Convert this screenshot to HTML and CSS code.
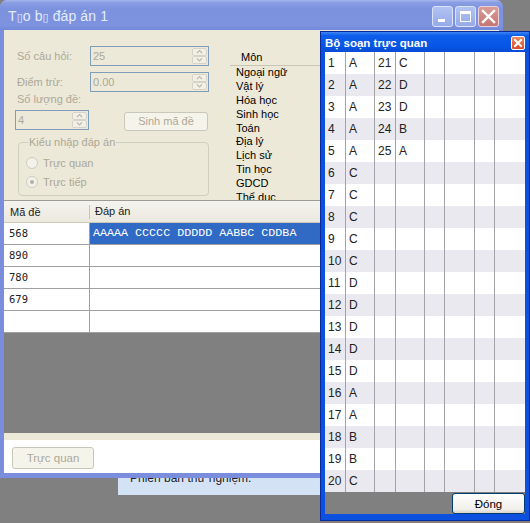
FILE: index.html
```html
<!DOCTYPE html>
<html lang="vi">
<head>
<meta charset="utf-8">
<title>Tạo bộ đáp án</title>
<link rel="stylesheet" href="styles.css">
</head>
<body>
<div class="desktop">
  <div class="status-strip">Phiên bản thử nghiệm.</div>

  <div class="win-main">
    <div class="main-title">
      <span class="main-title-text">T<span class="tofu">▯</span>o b<span class="tofu">▯</span> đáp án 1</span>
      <div class="caption-btns">
        <span class="cbtn"><svg width="19" height="19" viewBox="0 0 19 19"><rect x="5" y="12" width="7" height="3" fill="#fff"/></svg></span>
        <span class="cbtn"><svg width="19" height="19" viewBox="0 0 19 19"><rect x="4.5" y="4.5" width="10" height="10" fill="none" stroke="#fff" stroke-width="1"/><rect x="4" y="4" width="11" height="3" fill="#fff"/></svg></span>
        <span class="cbtn cbtn-close"><svg width="19" height="19" viewBox="0 0 19 19"><path d="M4 4 L15 15 M15 4 L4 15" stroke="#fff" stroke-width="2.4" stroke-linecap="square"/></svg></span>
      </div>
    </div>

    <div class="main-body">
      <div class="form-area">
        <div class="form-left">
          <div class="frow">
            <span class="lbl">Số câu hỏi:</span>
            <div class="spin spin-wide">
              <span class="spin-val">25</span>
              <span class="spin-btns"><svg width="15" height="16" viewBox="0 0 15 16"><rect x="0.5" y="0.5" width="14" height="7" rx="1.5" fill="#F1EFE6" stroke="#D6D3C6"/><rect x="0.5" y="8.5" width="14" height="7" rx="1.5" fill="#F1EFE6" stroke="#D6D3C6"/><path d="M5 5 L7.5 2.5 L10 5 M5 10.5 L7.5 13 L10 10.5" fill="none" stroke="#BDBAAE" stroke-width="1.2"/></svg></span>
            </div>
          </div>
          <div class="frow frow-2">
            <span class="lbl">Điểm trừ:</span>
            <div class="spin spin-wide">
              <span class="spin-val">0.00</span>
              <span class="spin-btns"><svg width="15" height="16" viewBox="0 0 15 16"><rect x="0.5" y="0.5" width="14" height="7" rx="1.5" fill="#F1EFE6" stroke="#D6D3C6"/><rect x="0.5" y="8.5" width="14" height="7" rx="1.5" fill="#F1EFE6" stroke="#D6D3C6"/><path d="M5 5 L7.5 2.5 L10 5 M5 10.5 L7.5 13 L10 10.5" fill="none" stroke="#BDBAAE" stroke-width="1.2"/></svg></span>
            </div>
          </div>
          <div class="lbl lbl-solo">Số lượng đề:</div>
          <div class="frow frow-4">
            <div class="spin spin-narrow">
              <span class="spin-val">4</span>
              <span class="spin-btns"><svg width="15" height="16" viewBox="0 0 15 16"><rect x="0.5" y="0.5" width="14" height="7" rx="1.5" fill="#F1EFE6" stroke="#D6D3C6"/><rect x="0.5" y="8.5" width="14" height="7" rx="1.5" fill="#F1EFE6" stroke="#D6D3C6"/><path d="M5 5 L7.5 2.5 L10 5 M5 10.5 L7.5 13 L10 10.5" fill="none" stroke="#BDBAAE" stroke-width="1.2"/></svg></span>
            </div>
            <button class="xpbtn xpbtn-off btn-gen">Sinh mã đề</button>
          </div>
          <fieldset class="group">
            <legend>Kiểu nhập đáp án</legend>
            <div class="radio"><span class="rcircle"></span>Trực quan</div>
            <div class="radio"><span class="rcircle rchecked"></span>Trực tiếp</div>
          </fieldset>
        </div>
        <div class="subject-list">
          <div class="list-head">Môn</div>
          <ul class="list-items">
            <li>Ngoại ngữ</li>
            <li>Vật lý</li>
            <li>Hóa học</li>
            <li>Sinh học</li>
            <li>Toán</li>
            <li>Địa lý</li>
            <li>Lịch sử</li>
            <li>Tin học</li>
            <li>GDCD</li>
            <li>Thể dục</li>
          </ul>
        </div>
      </div>

      <div class="grid-area">
        <div class="dg-head"><span class="c1">Mã đề</span><span class="c2">Đáp án</span></div>
        <div class="dg-row"><span class="c1">568</span><span class="c2 sel">AAAAA CCCCC DDDDD AABBC CDDBA</span></div>
        <div class="dg-row"><span class="c1">890</span><span class="c2"></span></div>
        <div class="dg-row"><span class="c1">780</span><span class="c2"></span></div>
        <div class="dg-row"><span class="c1">679</span><span class="c2"></span></div>
        <div class="dg-row"><span class="c1"></span><span class="c2"></span></div>
      </div>

      <div class="footer">
        <div class="footer-inner">
          <button class="xpbtn xpbtn-off btn-visual">Trực quan</button>
        </div>
      </div>
    </div>
  </div>

  <div class="win-tool">
    <div class="tool-title">
      <span class="tool-title-text">Bộ soạn trực quan</span>
      <span class="tool-close"><svg width="12" height="12" viewBox="0 0 12 12"><path d="M3 3 L9 9 M9 3 L3 9" stroke="#fff" stroke-width="2" stroke-linecap="square"/></svg></span>
    </div>
    <div class="tgrid">
      <div class="tr"><span>1</span><span>A</span><span>21</span><span>C</span><span></span><span></span><span></span><span></span></div>
      <div class="tr"><span>2</span><span>A</span><span>22</span><span>D</span><span></span><span></span><span></span><span></span></div>
      <div class="tr"><span>3</span><span>A</span><span>23</span><span>D</span><span></span><span></span><span></span><span></span></div>
      <div class="tr"><span>4</span><span>A</span><span>24</span><span>B</span><span></span><span></span><span></span><span></span></div>
      <div class="tr"><span>5</span><span>A</span><span>25</span><span>A</span><span></span><span></span><span></span><span></span></div>
      <div class="tr"><span>6</span><span>C</span><span></span><span></span><span></span><span></span><span></span><span></span></div>
      <div class="tr"><span>7</span><span>C</span><span></span><span></span><span></span><span></span><span></span><span></span></div>
      <div class="tr"><span>8</span><span>C</span><span></span><span></span><span></span><span></span><span></span><span></span></div>
      <div class="tr"><span>9</span><span>C</span><span></span><span></span><span></span><span></span><span></span><span></span></div>
      <div class="tr"><span>10</span><span>C</span><span></span><span></span><span></span><span></span><span></span><span></span></div>
      <div class="tr"><span>11</span><span>D</span><span></span><span></span><span></span><span></span><span></span><span></span></div>
      <div class="tr"><span>12</span><span>D</span><span></span><span></span><span></span><span></span><span></span><span></span></div>
      <div class="tr"><span>13</span><span>D</span><span></span><span></span><span></span><span></span><span></span><span></span></div>
      <div class="tr"><span>14</span><span>D</span><span></span><span></span><span></span><span></span><span></span><span></span></div>
      <div class="tr"><span>15</span><span>D</span><span></span><span></span><span></span><span></span><span></span><span></span></div>
      <div class="tr"><span>16</span><span>A</span><span></span><span></span><span></span><span></span><span></span><span></span></div>
      <div class="tr"><span>17</span><span>A</span><span></span><span></span><span></span><span></span><span></span><span></span></div>
      <div class="tr"><span>18</span><span>B</span><span></span><span></span><span></span><span></span><span></span><span></span></div>
      <div class="tr"><span>19</span><span>B</span><span></span><span></span><span></span><span></span><span></span><span></span></div>
      <div class="tr"><span>20</span><span>C</span><span></span><span></span><span></span><span></span><span></span><span></span></div>
    </div>
    <div class="tool-foot">
      <button class="xpbtn btn-close">Đóng</button>
    </div>
  </div>
</div>
</body>
</html>
```

FILE: styles.css
```css
* { box-sizing: border-box; margin: 0; padding: 0; }
html, body { width: 530px; height: 523px; overflow: hidden; }
body {
  background: #808080;
  font-family: "Liberation Sans", Arial, sans-serif;
  font-size: 11px;
  color: #000;
}
.desktop { position: relative; width: 530px; height: 523px; }

/* strip of an underlying window */
.status-strip {
  position: absolute;
  left: 118px; top: 466px;
  width: 212px; height: 29px;
  background: #D4E2F6;
  padding: 5px 0 0 12px;
  font-size: 12px;
  line-height: 14px;
  color: #222;
}

/* main window */
.win-main {
  position: absolute;
  left: 0; top: 0;
  width: 503px; height: 478px;
  display: flex;
  flex-direction: column;
  background: #7B8EDE;
  border-radius: 7px 7px 0 0;
  overflow: hidden;
}
.main-title {
  height: 30px;
  flex: none;
  display: flex;
  align-items: center;
  padding: 2px 4px 0 8px;
  background: linear-gradient(#A9B9EE 0, #8A9EE3 8%, #7C92DF 30%, #7D93DF 85%, #7287D8 100%);
}
.main-title-text {
  flex: 1;
  color: #E4ECFB;
  font-size: 14px;
  letter-spacing: 0.1px;
}
.tofu {
  font-family: "DejaVu Sans", sans-serif;
  font-size: 11px;
  color: #E4ECFB;
}
.caption-btns { display: flex; gap: 2px; }
.cbtn {
  width: 21px; height: 21px;
  border: 1px solid #DCE4FA;
  border-radius: 3px;
  background: linear-gradient(#B2C2F2, #95AAE9);
  display: flex;
  align-items: center;
  justify-content: center;
}
.cbtn-close { background: linear-gradient(#D99C97, #C47672); border-color: #EBD2DA; }

.main-body {
  flex: 1;
  display: flex;
  flex-direction: column;
  margin: 0 4px 5px 4px;
  background: #ECE9D8;
}

/* form area */
.form-area {
  height: 171px;
  flex: none;
  display: flex;
  border-bottom: 1px solid #9C9B95;
}
.form-left {
  width: 226px;
  flex: none;
  padding: 16px 0 0 13px;
}
.frow { display: flex; align-items: center; height: 20px; }
.frow-2 { margin-top: 6px; }
.lbl { width: 73px; color: #ACA899; }
.lbl-solo { margin-top: 1px; line-height: 13px; height: 13px; }
.frow-4 { margin-top: 4px; margin-left: -2px; }

.spin {
  height: 20px;
  border: 1px solid #7F9DB9;
  background: #ECE9D8;
  display: flex;
  align-items: center;
  justify-content: space-between;
  padding: 0 1px 0 2px;
  color: #ACA899;
}
.spin-wide { width: 119px; }
.spin-narrow { width: 74px; }
.spin-btns { display: flex; }

.xpbtn {
  font-family: "Liberation Sans", Arial, sans-serif;
  font-size: 11px;
  border-radius: 3px;
}
.xpbtn-off {
  border: 1px solid #C9C7BA;
  background: #F5F4EA;
  color: #ACA899;
}
.btn-gen { width: 84px; height: 19px; margin-left: 35px; margin-top: 2px; }

.group {
  margin: 6px 0 0 1px;
  width: 191px;
  height: 60px;
  border: 1px solid #D0D0BF;
  border-radius: 4px;
  padding: 4px 0 0 7px;
}
.group legend {
  color: #ACA899;
  padding: 0 1px;
  margin-left: 2px;
  line-height: 13px;
}
.radio {
  height: 19px;
  display: flex;
  align-items: center;
  gap: 5px;
  color: #ACA899;
}
.rcircle {
  width: 12px; height: 12px;
  border-radius: 50%;
  border: 1px solid #CFCDC1;
  background: #F3F2EA;
  display: flex;
  align-items: center;
  justify-content: center;
}
.rchecked::after {
  content: "";
  width: 4px; height: 4px;
  border-radius: 50%;
  background: #B3B0A3;
}

/* subject list */
.subject-list {
  flex: 1;
  padding-top: 14px;
  overflow: hidden;
}
.list-head {
  height: 22px;
  padding: 6px 0 0 11px;
  line-height: 14px;
  border-bottom: 1px solid #C8C5B4;
}
.list-items { list-style: none; padding-left: 6px; }
.list-items li { line-height: 13.9px; height: 13.9px; white-space: nowrap; }

/* data grid */
.grid-area {
  height: 232px;
  flex: none;
  background: #808080;
}
.dg-head {
  height: 22px;
  display: flex;
  background: linear-gradient(#F4F3EE, #EBE9DE);
  border-bottom: 1px solid #CCC9B9;
}
.dg-head .c1 {
  width: 86px;
  margin: 4px 0;
  height: 14px;
  line-height: 14px;
  padding-left: 6px;
  border-right: 1px solid #C9C6B6;
  color: #222;
}
.dg-head .c2 { line-height: 21px; padding-left: 5px; color: #222; }
.dg-row {
  height: 22px;
  display: flex;
  background: #fff;
  border-bottom: 1px solid #A0A0A0;
}
.dg-row .c1 {
  width: 86px;
  flex: none;
  border-right: 1px solid #A0A0A0;
  padding-left: 5px;
  line-height: 21px;
  font-family: "DejaVu Sans Mono", monospace;
  font-size: 10.5px;
  color: #222;
}
.dg-row .c2 {
  flex: 1;
  padding-left: 3px;
  line-height: 21px;
  font-family: "Liberation Mono", monospace;
  font-size: 11.7px;
  white-space: pre;
}
.dg-row .sel { background: #316AC5; color: #fff; }

/* footer */
.footer { flex: 1; padding-top: 7px; }
.footer-inner {
  height: 100%;
  background: #fff;
  padding: 7px 0 0 8px;
}
.btn-visual { width: 82px; height: 22px; font-size: 11.5px; }

/* tool window */
.win-tool {
  position: absolute;
  left: 320px; top: 31px;
  width: 210px; height: 490px;
  border: 1px solid #0A2A9C;
  background: #0B50DE;
  display: flex;
  flex-direction: column;
  padding: 0 4px 6px 4px;
}
.tool-title {
  height: 20px;
  flex: none;
  margin: 0 -4px;
  display: flex;
  align-items: center;
  padding: 1px 4px 0 4px;
  background: linear-gradient(#3D86F4 0, #0D5DEA 18%, #0755E4 75%, #0A4AD4 100%);
}
.tool-title-text {
  flex: 1;
  color: #fff;
  font-weight: bold;
  font-size: 11.5px;
}
.tool-close {
  width: 14px; height: 14px;
  border: 1px solid #fff;
  border-radius: 2px;
  background: linear-gradient(#EE8A5E, #D9492A);
  display: flex;
  align-items: center;
  justify-content: center;
}
.tgrid { height: 440px; flex: none; background: #fff; }
.tr {
  height: 22px;
  display: grid;
  grid-template-columns: 21px 29px 21px 29px 20px 30px 20px 30px;
  font-size: 12px;
  line-height: 22px;
  color: #222;
}
.tr:nth-child(even) { background: #E9E9EF; }
.tr span { border-right: 1px solid #A3A3A3; padding-left: 3px; white-space: nowrap; }
.tr span:last-child { border-right: none; }
.tool-foot {
  height: 22px;
  flex: none;
  background: #808080;
  display: flex;
  justify-content: flex-end;
  align-items: flex-start;
  padding-top: 1px;
}
.btn-close {
  width: 73px; height: 21px;
  border: 1px solid #003C74;
  background: linear-gradient(#FFFFFF, #F0EFEA 80%, #D8D5CA);
  color: #000;
  font-size: 11.5px;
}
```
